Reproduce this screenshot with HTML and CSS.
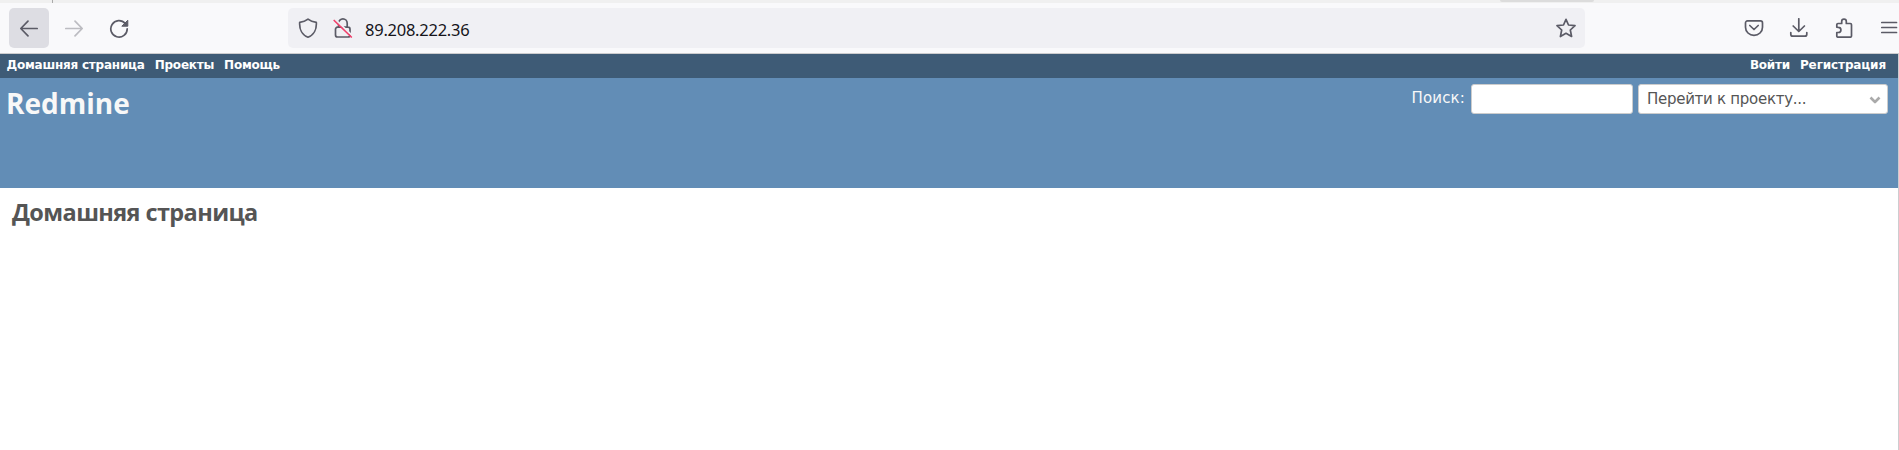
FILE: index.html
```html
<!DOCTYPE html>
<html lang="ru">
<head>
<meta charset="utf-8">
<title>Redmine</title>
<link rel="stylesheet" href="styles.css">
</head>
<body>
<div class="tabstrip"><span class="tab-sep"></span><span class="tab-shadow"></span></div>
<div class="toolbar">
  <button class="tool active" aria-label="Назад"><svg width="20" height="20" viewBox="0 0 20 20"><path d="M18.2 10.5H2M9 3.2L1.8 10.5L9 17.8"/></svg></button>
  <button class="tool disabled" aria-label="Вперёд"><svg width="20" height="20" viewBox="0 0 20 20"><path d="M1.8 10.5H18M11 3.2L18.2 10.5L11 17.8"/></svg></button>
  <button class="tool" aria-label="Обновить"><svg width="20" height="20" viewBox="0 0 20 20"><path d="M16.200 5.500A8.200 8.200 0 1 0 18.200 10.800"/><path class="solid" d="M18.800 2.600V8.200H13.200Z"/></svg></button>
  <div class="urlbar">
    <svg class="shield" width="20" height="20" viewBox="0 0 20 20"><path d="M10 1.200C7.500 3.200 4.500 4 1.700 4.300C1.200 11 4 17 10 19.200C16 17 18.800 11 18.300 4.300C15.500 4 12.500 3.200 10 1.200Z"/></svg>
    <svg class="lock" width="20" height="20" viewBox="0 0 20 20"><path d="M5.600 9V5.200A4.300 4.300 0 0 1 14.200 5.200V9M4.500 9.200H15A2 2 0 0 1 17 11.200V17A2 2 0 0 1 15 19H4.500A2 2 0 0 1 2.500 17V11.200A2 2 0 0 1 4.500 9.200Z"/><path class="slash-gap" d="M2.500 1.800L19.500 17.800"/><path class="slash" d="M1.200 2.500L18.300 19"/></svg>
    <span class="url">89.208.222.36</span>
    <svg class="star" width="20" height="20" viewBox="0 0 20 20"><path d="M10 1.300L12.500 7L19 7.600L14.300 12L15.600 18.500L10 15.300L4.400 18.500L5.700 12L1 7.600L7.500 7Z"/></svg>
  </div>
  <div class="tools-right">
    <button class="tool" aria-label="Pocket"><svg width="20" height="20" viewBox="0 0 20 20"><path d="M3.500 2.900H16.500A2 2 0 0 1 18.500 4.900V9.200A8.500 8.200 0 0 1 1.500 9.200V4.900A2 2 0 0 1 3.500 2.900ZM5.800 7.500L10 11.500L14.200 7.500"/></svg></button>
    <button class="tool" aria-label="Загрузки"><svg width="20" height="20" viewBox="0 0 20 20"><path d="M9.800 .8V13.300M4.200 8L9.800 13.500L15.400 8M1.800 14.500V16.200A2 2 0 0 0 3.800 18.200H15.800A2 2 0 0 0 17.800 16.200V14.500"/></svg></button>
    <button class="tool" aria-label="Расширения"><svg width="20" height="20" viewBox="0 0 20 20"><path d="M2.800 9.200V6.700A1.200 1.200 0 0 1 4 5.500H7.700V3.500A2.300 2.300 0 0 1 12.300 3.500V5.500H16.300A1.200 1.200 0 0 1 17.500 6.700V18A1.200 1.200 0 0 1 16.300 19.200H4A1.200 1.200 0 0 1 2.800 18V14.500H4.300A2.600 2.600 0 0 0 4.300 9.300Z"/></svg></button>
    <button class="tool menu" aria-label="Меню"><svg width="20" height="20" viewBox="0 0 20 20"><path d="M2.800 4.500H17.500M2.800 9.500H17.500M2.800 14.500H17.500"/></svg></button>
  </div>
</div>
<div class="page">
  <nav class="top-menu">
    <a class="home">Домашняя страница</a><a class="projects">Проекты</a><a class="help">Помощь</a>
    <div class="account"><a class="login">Войти</a><a class="register">Регистрация</a></div>
  </nav>
  <header class="header">
    <h1>Redmine</h1>
    <div class="quick-search">
      <label for="q">Поиск:</label>
      <input id="q" class="search">
      <div class="project-jump"><span>Перейти к проекту...</span><svg width="12" height="8" viewBox="0 0 12 8"><path d="M1.500 1.500L6 6L10.500 1.500"/></svg></div>
    </div>
  </header>
  <main class="content"><h2>Домашняя страница</h2></main>
</div>
</body>
</html>
```
FILE: styles.css
```css
* { box-sizing: border-box; }
body { margin: 0; height: 450px; overflow: hidden; background: #fff; font-family: "DejaVu Sans", sans-serif; display: flex; flex-direction: column; }
svg { display: block; fill: none; stroke: #5b5b66; stroke-width: 1.7; stroke-linecap: round; stroke-linejoin: round; flex: none; }
.tabstrip { height: 3px; background: #f0f0f0; display: flex; flex: none; }
.tab-sep { width: 1px; height: 3px; margin-left: 52px; background: #aaa; }
.tab-shadow { width: 94px; height: 2px; margin-left: 1447px; background: #dcdcdc; border-radius: 0 0 4px 4px; }
.toolbar { height: 51px; flex: none; display: flex; gap: 5px; padding: 5px 0 0 9px; background: #f9f9fb; border-bottom: 1px solid #ccccce; }
.tool { width: 40px; height: 40px; flex: none; border: 0; padding: 0; border-radius: 5px; background: none; display: flex; align-items: center; justify-content: center; }
.active { background: #dddde3; }
.disabled svg { stroke: #bcbcc1; }
.solid { fill: #5b5b66; stroke-width: 1; }
.urlbar { width: 1297px; height: 40px; margin-left: 144px; background: #f0f0f4; border-radius: 5px; display: flex; align-items: center; padding: 0 9px 0 10px; flex: none; }
.lock { margin-left: 15px; }
.slash-gap { stroke: #f0f0f4; stroke-width: 2; }
.slash { stroke: #f1416c; }
.url { margin: 4px 0 0 12px; font-family: "Noto Sans", sans-serif; font-size: 16.5px; line-height: 22px; color: #15141a; letter-spacing: -.25px; }
.star { margin-left: auto; }
.tools-right { display: flex; gap: 5px; margin-left: 144px; }
.menu { width: 30px; justify-content: flex-start; padding-left: 10px; }
.page { flex: 1; border-right: 1px solid #cdcdd0; }
.top-menu { height: 24px; background: #3e5b76; color: #fff; font-size: 12px; font-weight: 700; line-height: 14px; letter-spacing: -.22px; padding: 4px 12px 0 6.5px; display: flex; white-space: nowrap; }
.projects { margin-left: 10px; }
.help { margin-left: 10px; }
.account { display: flex; gap: 10px; margin-left: auto; }
.register { letter-spacing: -.12px; }
.header { height: 110px; background: #628db6; color: #f8f8f8; display: flex; justify-content: space-between; padding: 6px 10px 0 6px; }
h1, h2 { margin: 0; font-family: "Open Sans", sans-serif; font-weight: 700; white-space: nowrap; }
h1 { font-size: 28px; line-height: 39px; }
.quick-search { display: flex; align-items: flex-start; font-size: 15px; white-space: nowrap; }
.quick-search label { line-height: 18px; margin: 5px 6px 0 0; letter-spacing: .15px; }
.search { width: 162px; height: 30px; border: 1px solid #ccc; border-radius: 3px; padding: 0; background: #fff; }
.project-jump { width: 250px; height: 30px; margin-left: 5px; border: 1px solid #ccc; border-radius: 3px; background: #fff; color: #555; letter-spacing: -.28px; display: flex; align-items: center; justify-content: space-between; padding: 0 6px 0 8px; }
.project-jump svg { stroke: #aaa; stroke-width: 2.6; stroke-linecap: butt; margin-top: 2px; }
.content { padding: 7px 12px; color: #555; }
h2 { font-size: 23.5px; line-height: 34px; letter-spacing: -.6px; }
```
